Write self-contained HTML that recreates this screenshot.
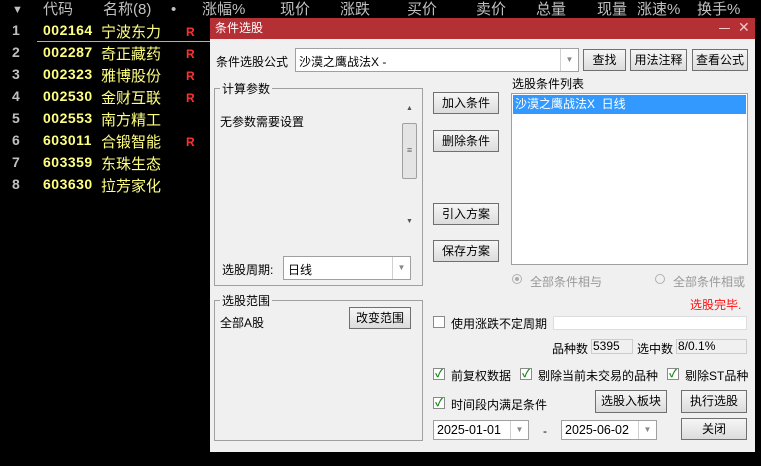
<!DOCTYPE html><html><head><meta charset="utf-8"><style>
body{margin:0;width:761px;height:466px;background:#000;position:relative;overflow:hidden;font-family:"Liberation Sans","Noto Sans CJK SC",sans-serif;font-size:12px;color:#000}
.a{position:absolute;white-space:nowrap}
.h{color:#c0c0c0;font-size:15px;top:0;line-height:20px}
.n{color:#c0c0c0;font-size:14px;left:12px;font-weight:bold}
.c{color:#ffff80;font-size:14px;left:43px;font-weight:bold;letter-spacing:.5px}
.m{color:#ffff80;font-size:15px;left:101px}
.r{color:#ff3030;font-size:12px;left:186px;font-weight:bold}
.btn{position:absolute;border:1px solid #707070;background:linear-gradient(#f6f6f6,#dcdcdc);text-align:center;font-size:12px;box-sizing:border-box}
.box{position:absolute;background:#fff;border:1px solid #a0a0a0;box-sizing:border-box}
.grp{position:absolute;border:1px solid #a0a0a0;box-sizing:border-box}
.cb{position:absolute;width:12px;height:12px;border:1px solid #8a8a8a;background:#fff;box-sizing:border-box;font-size:11px;line-height:10px;color:#1a8a1a;text-align:center;font-weight:bold}
.dd{position:absolute;right:0;top:0;bottom:0;width:17px;border-left:1px solid #d0d0d0;color:#888;font-size:8px;text-align:center}
</style></head><body>
<div class="a h" style="left:12px;font-size:11px">▼</div>
<div class="a h" style="left:43px">代码</div>
<div class="a h" style="left:103px">名称(8)</div>
<div class="a h" style="left:171px">•</div>
<div class="a h" style="left:202px">涨幅%</div>
<div class="a h" style="left:280px">现价</div>
<div class="a h" style="left:340px">涨跌</div>
<div class="a h" style="left:407px">买价</div>
<div class="a h" style="left:476px">卖价</div>
<div class="a h" style="left:536px">总量</div>
<div class="a h" style="left:597px">现量</div>
<div class="a h" style="left:637px">涨速%</div>
<div class="a h" style="left:697px">换手%</div>
<div class="a" style="left:37px;top:41px;width:175px;height:1px;background:#c8c800"></div>
<div class="a n" style="top:22px">1</div><div class="a c" style="top:22px">002164</div><div class="a m" style="top:21px">宁波东力</div><div class="a r" style="top:25px">R</div>
<div class="a n" style="top:44px">2</div><div class="a c" style="top:44px">002287</div><div class="a m" style="top:43px">奇正藏药</div><div class="a r" style="top:47px">R</div>
<div class="a n" style="top:66px">3</div><div class="a c" style="top:66px">002323</div><div class="a m" style="top:65px">雅博股份</div><div class="a r" style="top:69px">R</div>
<div class="a n" style="top:88px">4</div><div class="a c" style="top:88px">002530</div><div class="a m" style="top:87px">金财互联</div><div class="a r" style="top:91px">R</div>
<div class="a n" style="top:110px">5</div><div class="a c" style="top:110px">002553</div><div class="a m" style="top:109px">南方精工</div>
<div class="a n" style="top:132px">6</div><div class="a c" style="top:132px">603011</div><div class="a m" style="top:131px">合锻智能</div><div class="a r" style="top:135px">R</div>
<div class="a n" style="top:154px">7</div><div class="a c" style="top:154px">603359</div><div class="a m" style="top:153px">东珠生态</div>
<div class="a n" style="top:176px">8</div><div class="a c" style="top:176px">603630</div><div class="a m" style="top:175px">拉芳家化</div>

<div class="a" style="left:210px;top:18px;width:545px;height:434px;background:#f0f0f0"></div>
<div class="a" style="left:210px;top:18px;width:545px;height:21px;background:#b53035"></div>
<div class="a" style="left:215px;top:20px;color:#fff;font-size:12px;line-height:17px">条件选股</div>
<div class="a" style="left:719px;top:28px;width:11px;height:1px;background:#f0c8c8"></div>
<div class="a" style="left:738px;top:19px;color:#f0c8c8;font-size:14px">✕</div>

<div class="a" style="left:216px;top:53px">条件选股公式</div>
<div class="box" style="left:295px;top:48px;width:284px;height:24px"><span class="a" style="left:3px;top:4px">沙漠之鹰战法X -</span><div class="dd" style="line-height:22px">▼</div></div>
<div class="btn" style="left:583px;top:49px;width:43px;height:22px;line-height:20px">查找</div>
<div class="btn" style="left:630px;top:49px;width:57px;height:22px;line-height:20px">用法注释</div>
<div class="btn" style="left:692px;top:49px;width:56px;height:22px;line-height:20px">查看公式</div>

<div class="grp" style="left:214px;top:88px;width:209px;height:198px"></div>
<div class="a" style="left:220px;top:80px;background:#f0f0f0;padding:0 2px">计算参数</div>
<div class="a" style="left:220px;top:113px">无参数需要设置</div>
<div class="a" style="left:402px;top:105px;width:15px;height:124px;background:#f0f0f0;font-size:7px;color:#555;text-align:center">▲</div>
<div class="a" style="left:402px;top:123px;width:15px;height:56px;border:1px solid #a0a0a0;border-radius:2px;background:#e4e4e4;box-sizing:border-box;font-size:9px;text-align:center;line-height:52px;color:#666">≡</div>
<div class="a" style="left:402px;top:218px;font-size:7px;color:#555;width:15px;text-align:center">▼</div>
<div class="a" style="left:222px;top:261px">选股周期:</div>
<div class="box" style="left:283px;top:256px;width:128px;height:24px"><span class="a" style="left:4px;top:4px">日线</span><div class="dd" style="line-height:22px">▼</div></div>

<div class="grp" style="left:214px;top:300px;width:209px;height:141px"></div>
<div class="a" style="left:220px;top:292px;background:#f0f0f0;padding:0 2px">选股范围</div>
<div class="a" style="left:220px;top:314px">全部A股</div>
<div class="btn" style="left:349px;top:307px;width:62px;height:22px;line-height:20px">改变范围</div>

<div class="btn" style="left:433px;top:92px;width:66px;height:22px;line-height:20px">加入条件</div>
<div class="btn" style="left:433px;top:130px;width:66px;height:22px;line-height:20px">删除条件</div>
<div class="btn" style="left:433px;top:203px;width:66px;height:22px;line-height:20px">引入方案</div>
<div class="btn" style="left:433px;top:240px;width:66px;height:22px;line-height:20px">保存方案</div>

<div class="a" style="left:512px;top:75px">选股条件列表</div>
<div class="box" style="left:511px;top:93px;width:237px;height:172px"></div>
<div class="a" style="left:513px;top:95px;width:233px;height:19px;background:#3399ff;color:#fff;line-height:19px;padding-left:2px;box-sizing:border-box">沙漠之鹰战法X&nbsp;&nbsp;日线</div>
<div class="a" style="left:512px;top:274px;width:10px;height:10px;border:1px solid #b0b0b0;border-radius:50%;box-sizing:border-box"><div style="margin:2px;width:4px;height:4px;border-radius:50%;background:#aaa"></div></div>
<div class="a" style="left:530px;top:273px;color:#999">全部条件相与</div>
<div class="a" style="left:655px;top:274px;width:10px;height:10px;border:1px solid #b0b0b0;border-radius:50%;box-sizing:border-box"></div>
<div class="a" style="left:673px;top:273px;color:#999">全部条件相或</div>
<div class="a" style="left:690px;top:296px;color:#ff1010">选股完毕.</div>

<div class="cb" style="left:433px;top:316px"></div>
<div class="a" style="left:451px;top:315px">使用涨跌不定周期</div>
<div class="a" style="left:553px;top:316px;width:194px;height:14px;background:#fff;border:1px solid #ddd;box-sizing:border-box"></div>
<div class="a" style="left:552px;top:340px">品种数</div>
<div class="a" style="left:591px;top:339px;width:42px;height:15px;border:1px solid #ccc;box-sizing:border-box;padding-left:1px;line-height:13px">5395</div>
<div class="a" style="left:637px;top:340px">选中数</div>
<div class="a" style="left:676px;top:339px;width:71px;height:15px;border:1px solid #ccc;box-sizing:border-box;padding-left:1px;line-height:13px">8/0.1%</div>

<div class="cb" style="left:433px;top:368px">✓</div><div class="a" style="left:451px;top:367px">前复权数据</div>
<div class="cb" style="left:520px;top:368px">✓</div><div class="a" style="left:538px;top:367px">剔除当前未交易的品种</div>
<div class="cb" style="left:667px;top:368px">✓</div><div class="a" style="left:685px;top:367px">剔除ST品种</div>
<div class="cb" style="left:433px;top:397px">✓</div><div class="a" style="left:451px;top:396px">时间段内满足条件</div>
<div class="btn" style="left:595px;top:390px;width:72px;height:23px;line-height:21px">选股入板块</div>
<div class="btn" style="left:681px;top:390px;width:66px;height:23px;line-height:21px">执行选股</div>
<div class="btn" style="left:681px;top:418px;width:66px;height:22px;line-height:20px">关闭</div>
<div class="box" style="left:433px;top:420px;width:96px;height:20px"><span class="a" style="left:3px;top:2px;font-size:12.5px">2025-01-01</span><div class="dd" style="line-height:18px">▼</div></div>
<div class="a" style="left:543px;top:424px">-</div>
<div class="box" style="left:561px;top:420px;width:96px;height:20px"><span class="a" style="left:3px;top:2px;font-size:12.5px">2025-06-02</span><div class="dd" style="line-height:18px">▼</div></div>
</body></html>
